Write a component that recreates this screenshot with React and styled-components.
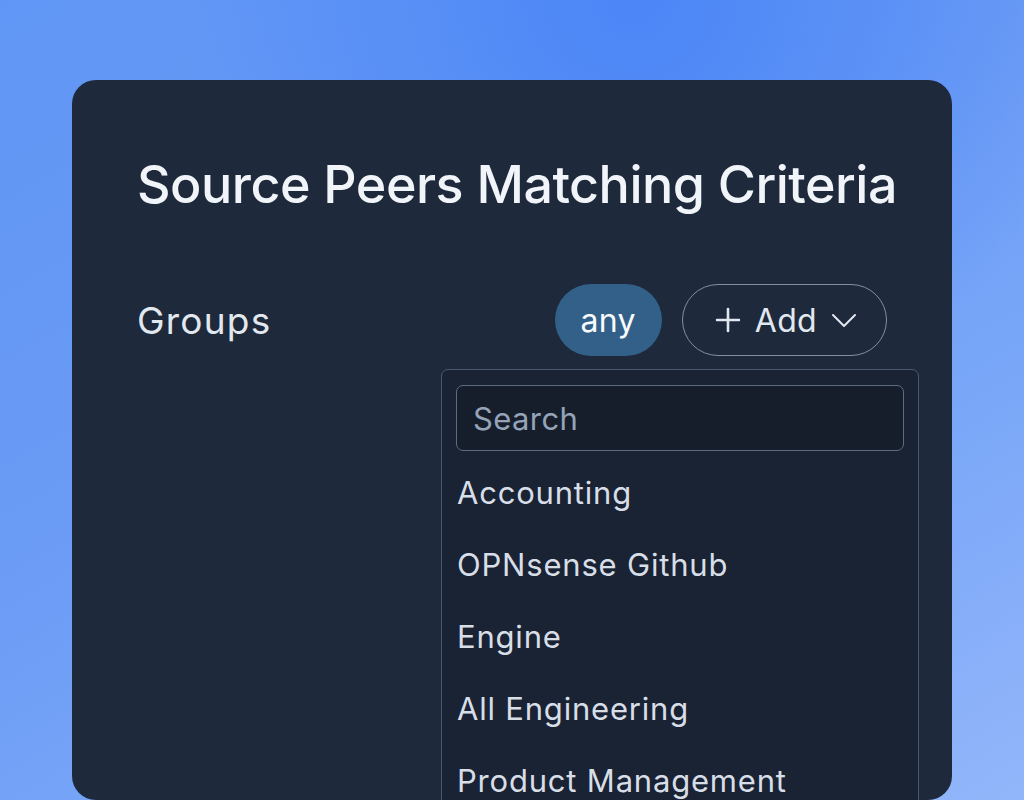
import React from "react";
import styled, { createGlobalStyle } from "styled-components";

const groups = [
	"Accounting",
	"OPNsense Github",
	"Engine",
	"All Engineering",
	"Product Management",
];

const GlobalStyle = createGlobalStyle`
	html, body {
		margin: 0;
		padding: 0;
		height: 100%;
	}
	body {
		font-family: Inter, "Noto Sans", sans-serif;
		background:
			radial-gradient(ellipse 45% 55% at 62% 0%, rgba(74, 133, 247, 0.95) 0%, rgba(74, 133, 247, 0) 100%),
			linear-gradient(150deg, #6096f5 0%, #6a9bf5 40%, #7aa7f8 70%, #93b6fa 100%);
		overflow: hidden;
	}
`;

const Page = styled.div`
	width: 1024px;
	height: 800px;
	padding: 80px 72px 0;
	box-sizing: border-box;
`;

const Card = styled.div`
	height: 720px;
	background: #1e293b;
	border-radius: 24px;
	padding: 0 65px;
	overflow: hidden;
`;

const Title = styled.h1`
	margin: 0;
	padding-top: 74px;
	font-size: 52px;
	font-weight: 500;
	letter-spacing: -0.5px;
	color: #f1f5f9;
	line-height: 62px;
	white-space: nowrap;
`;

const Row = styled.div`
	position: relative;
	display: flex;
	align-items: center;
	justify-content: space-between;
	margin-top: 68px;
`;

const Label = styled.span`
	font-size: 37px;
	color: #e2e8f0;
	letter-spacing: 1.2px;
`;

const Actions = styled.div`
	display: flex;
	gap: 20px;
`;

const Pill = styled.button`
	height: 72px;
	padding: 0 ${(p) => (p.$outline ? "29px 0 32px" : "25px")};
	border-radius: 36px;
	border: 1px solid ${(p) => (p.$outline ? "#8190a5" : "transparent")};
	background: ${(p) => (p.$outline ? "transparent" : "#336089")};
	color: ${(p) => (p.$outline ? "#e2e8f0" : "#f8fafc")};
	font-family: inherit;
	font-size: 32px;
	display: flex;
	align-items: center;
	gap: 14px;
	letter-spacing: 0.3px;
`;

const Dropdown = styled.div`
	position: absolute;
	top: 85px;
	right: -32px;
	width: 478px;
	height: 460px;
	box-sizing: border-box;
	padding: 15px 14px;
	background: #1a2333;
	border: 1px solid #4b5a70;
	border-radius: 7px;
`;

const Search = styled.div`
	height: 66px;
	box-sizing: border-box;
	border: 1px solid #5d6b80;
	border-radius: 7px;
	background: #161e2c;
	display: flex;
	align-items: center;
	padding: 0 16px;
	font-size: 31px;
	letter-spacing: 0.4px;
	color: #94a3b8;
`;

const List = styled.ul`
	list-style: none;
	margin: 0;
	padding: 5px 0 0 1px;
`;

const Item = styled.li`
	height: 72px;
	display: flex;
	align-items: center;
	font-size: 31px;
	color: #d8dee7;
	letter-spacing: 0.8px;
	white-space: nowrap;
`;

const Plus = () => (
	<svg width="26" height="26" viewBox="0 0 26 26" fill="none" stroke="#e2e8f0" strokeWidth="2.6" strokeLinecap="round">
		<path d="M13 2v22M2 13h22" />
	</svg>
);

const Chevron = () => (
	<svg width="26" height="16" viewBox="0 0 26 16" fill="none" stroke="#e2e8f0" strokeWidth="2" strokeLinecap="round" strokeLinejoin="round">
		<path d="M2 3l11 11L24 3" />
	</svg>
);

export default function App() {
	return (
		<>
			<GlobalStyle />
			<Page>
				<Card>
					<Title>Source Peers Matching Criteria</Title>
					<Row>
						<Label>Groups</Label>
						<Actions>
							<Pill>any</Pill>
							<Pill $outline>
								<Plus />
								Add
								<Chevron />
							</Pill>
						</Actions>
						<Dropdown>
							<Search>Search</Search>
							<List>
								{groups.map((g) => (
									<Item key={g}>{g}</Item>
								))}
							</List>
						</Dropdown>
					</Row>
				</Card>
			</Page>
		</>
	);
}
